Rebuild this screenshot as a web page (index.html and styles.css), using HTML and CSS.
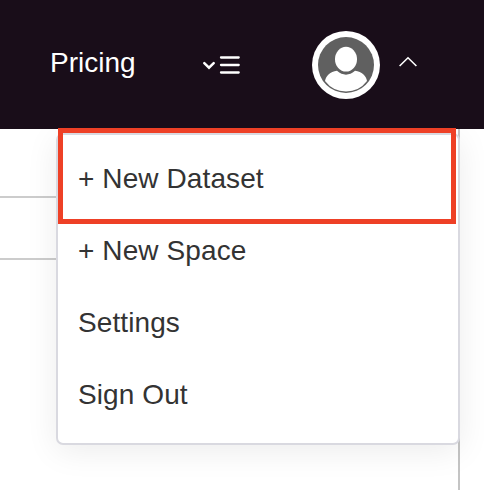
FILE: index.html
```
<!DOCTYPE html>
<html lang="en">
<head>
<meta charset="utf-8">
<title>Account menu</title>
<link rel="stylesheet" href="styles.css">
</head>
<body>
<header class="topbar">
  <a class="pricing">Pricing</a>
  <svg class="nav-toggle" width="40" height="24" viewBox="0 0 40 24" fill="none" stroke="#fff" stroke-linecap="round">
    <path d="M2.3 11.2 7 15.7 11.7 11.2" stroke-width="2.5"/>
    <path d="M19 5.5H36.7M19 13H36.7M19 20.5H36.7" stroke-width="2.3"/>
  </svg>
  <svg class="avatar" width="68" height="68" viewBox="0 0 68 68">
    <circle cx="34" cy="34" r="34" fill="#fff"/>
    <circle cx="34" cy="34" r="28" fill="#606060"/>
    <path d="M13 50C14 44.5 18 41 25 39.8Q34 47.5 43 39.8C50 41 54 44.5 55 50Q47 60.5 34 60.5T13 50Z" fill="#fff"/>
    <ellipse cx="34" cy="28.2" rx="11" ry="12.4" fill="#fff"/>
  </svg>
  <svg class="caret" width="20" height="12" viewBox="0 0 20 12" fill="none" stroke="#fff" stroke-width="1.6">
    <path d="M1.6 10 10 1.8 18.4 10"/>
  </svg>
</header>
<main class="page">
  <div class="row row-first"></div>
  <div class="row row-second"></div>
  <nav class="menu">
    <a class="item">+ New Dataset</a>
    <a class="item">+ New Space</a>
    <a class="item">Settings</a>
    <a class="item">Sign Out</a>
  </nav>
</main>
<div class="highlight"></div>
</body>
</html>
```
FILE: styles.css
```
* {
  box-sizing: border-box;
}

body {
  margin: 0;
  height: 490px;
  position: relative;
  overflow: hidden;
  background: #fff;
  color: #333;
  font: 28px/72px "Liberation Sans", Arial, sans-serif;
}

.topbar {
  display: flex;
  align-items: center;
  height: 129px;
  padding-left: 50px;
  background: #190d19;
}

.pricing {
  width: 152px;
  margin-top: -4px;
  color: #fff;
}

.nav-toggle {
  flex: none;
  margin-top: -1px;
}

.avatar {
  flex: none;
  margin-left: 70px;
}

.caret {
  flex: none;
  margin: -5px 0 0 18px;
}

.page {
  position: relative;
  width: 460px;
  height: 361px;
  border-right: 2px solid #c4c4c4;
  /* keeps the menu shadow off the top bar */
  clip-path: inset(0 -24px 0 0);
}

.row {
  border-bottom: 2px solid #ccc;
}

.row-first {
  height: 69px;
}

.row-second {
  height: 62px;
}

.menu {
  position: absolute;
  top: 4px;
  left: 56px;
  width: 404px;
  height: 312px;
  padding: 8px 20px;
  background: #fff;
  border: 2px solid #d9d9e0;
  border-radius: 7px;
  box-shadow: 0 6px 32px rgba(0, 0, 0, 0.08);
}

.item {
  display: block;
  letter-spacing: 0.1px;
}

.highlight {
  position: absolute;
  top: 128px;
  left: 58px;
  width: 398px;
  height: 96px;
  border: 5px solid #ee4026;
}
```
